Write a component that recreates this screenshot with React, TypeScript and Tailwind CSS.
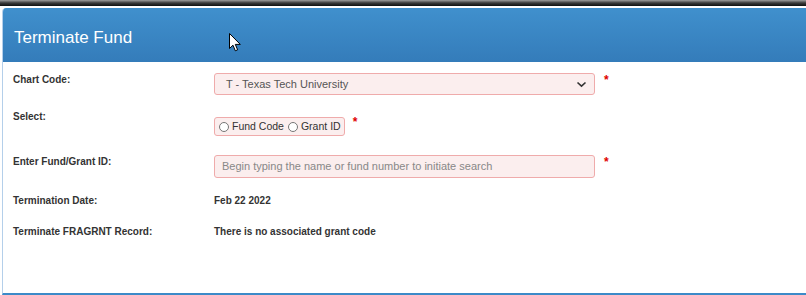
import React from "react";

const Req: React.FC = () => (
  <span className="ml-[9px] mt-[1px] text-[12px] font-bold leading-[12px] text-[#e00000]">*</span>
);

const Label: React.FC<{ children: React.ReactNode }> = ({ children }) => (
  <div className="w-[201px] shrink-0 text-[10px] font-bold leading-[14px] text-[#333]">{children}</div>
);

const Radio: React.FC<{ label: string }> = ({ label }) => (
  <label className="flex shrink-0 items-center gap-[3px] whitespace-nowrap">
    <span className="h-[10px] w-[10px] shrink-0 rounded-full border border-[#767676] bg-white" />
    <span>{label}</span>
  </label>
);

const App: React.FC = () => {
  return (
    <div
      className="relative h-[295px] w-[806px] overflow-hidden bg-white"
      style={{ fontFamily: '"Liberation Sans", Arial, sans-serif' }}
    >
      {/* window shadow strip */}
      <div className="h-[6px] bg-gradient-to-b from-[#a0a0a0] via-[#3a3a3a] to-[#111]" />
      <div className="h-[2px] bg-white" />

      <div className="ml-[2px] flex h-[287px] flex-col overflow-hidden rounded-tl-[4px] border-b-2 border-l border-[#3c8ac8] border-l-[#b4cfea]">
        <div className="h-[54px] shrink-0 bg-gradient-to-b from-[#4090cd] to-[#347cba] pl-[11px] pt-[20px] text-[17px] leading-[20px] text-white">
          Terminate Fund
        </div>

        <div className="flex flex-col pl-[10px] pt-[11px]">
          <div className="flex h-[22px] items-start">
            <Label>Chart Code:</Label>
            <div className="flex h-[22px] w-[381px] items-center justify-between rounded-[3px] border border-[#efabab] bg-[#fbeeee] pl-[11px] pr-[7px] text-[11px] text-[#555]">
              <span>T - Texas Tech University</span>
              <svg width="11" height="7" viewBox="0 0 11 7" fill="none">
                <path d="M1.5 1.5 L5.5 5.2 L9.5 1.5" stroke="#333" strokeWidth="1.6" />
              </svg>
            </div>
            <Req />
          </div>

          <div className="mt-[15px] flex h-[25px] items-start">
            <Label>Select:</Label>
            <div className="mt-[7px] flex h-[19px] items-center gap-[4px] rounded-[3px] border border-[#efabab] bg-[#fbeeee] pl-[4px] pr-[3px] text-[10.5px] text-[#333]">
              <Radio label="Fund Code" />
              <Radio label="Grant ID" />
            </div>
            <span className="ml-[8px] mt-[6px] text-[12px] font-bold leading-[12px] text-[#e00000]">*</span>
          </div>

          <div className="mt-[20px] flex h-[23px] items-start">
            <Label>Enter Fund/Grant ID:</Label>
            <div className="flex h-[23px] w-[381px] items-center rounded-[3px] border border-[#efabab] bg-[#fbeeee] pl-[7px] text-[11px] text-[#888]">
              Begin typing the name or fund number to initiate search
            </div>
            <Req />
          </div>

          <div className="mt-[16px] flex items-start">
            <Label>Termination Date:</Label>
            <div className="text-[10px] font-bold leading-[14px] text-[#333]">Feb 22 2022</div>
          </div>

          <div className="mt-[17px] flex items-start">
            <Label>Terminate FRAGRNT Record:</Label>
            <div className="text-[10px] font-bold leading-[14px] text-[#333]">There is no associated grant code</div>
          </div>
        </div>
      </div>

      {/* mouse pointer */}
      <svg className="absolute left-[229px] top-[33px]" width="13" height="19" viewBox="0 0 13 19">
        <path
          d="M0.5 0.5 L0.5 15.5 L4 12.2 L6.3 17.8 L8.6 16.8 L6.3 11.4 L11.3 11.4 Z"
          fill="white"
          stroke="black"
          strokeWidth="1"
          strokeLinejoin="round"
        />
      </svg>
    </div>
  );
};

export default App;
